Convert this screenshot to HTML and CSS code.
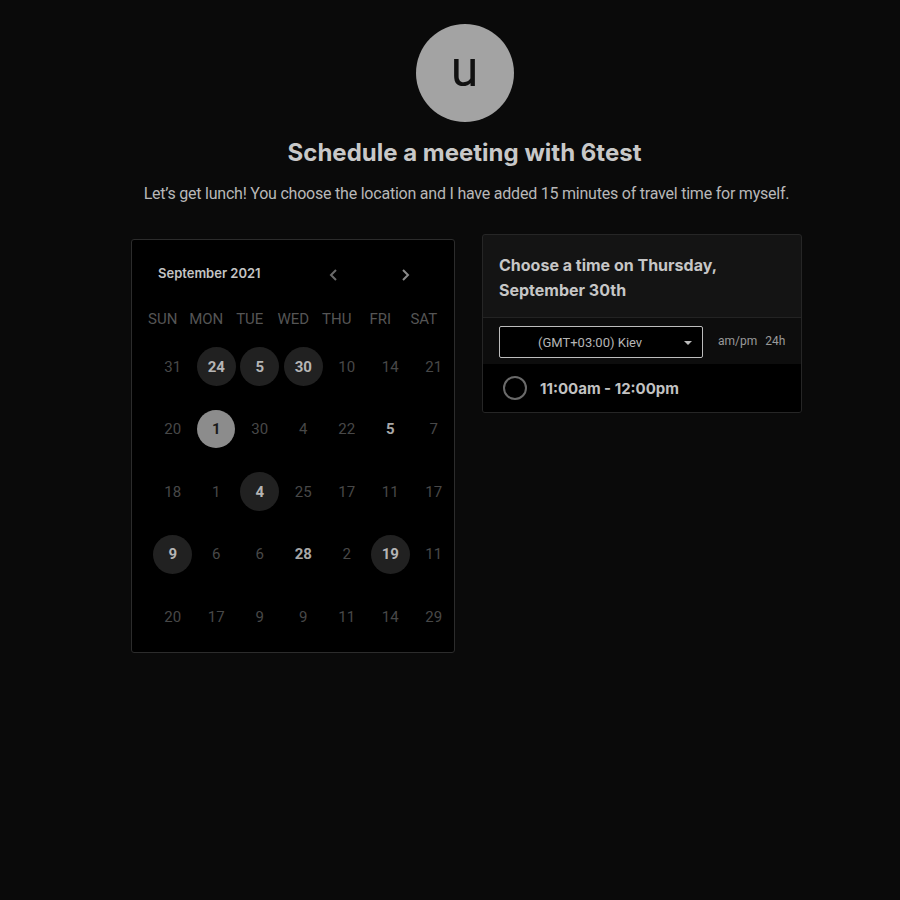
FILE: index.html
```html
<!DOCTYPE html>
<html>
<head>
<meta charset="utf-8">
<link rel="stylesheet" href="styles.css">
</head>
<body>
<main class="page">
  <div class="avatar">u</div>
  <h1 class="title">Schedule a meeting with 6test</h1>
  <p class="subtitle">Let’s get lunch! You choose the location and I have added 15 minutes of travel time for myself.</p>
  <div class="panels">
    <section class="calendar">
      <div class="cal-head">
        <span class="month">September 2021</span>
        <span class="nav">
          <svg width="12" height="14" viewBox="0 0 12 14"><path d="M8 2 L3 7 L8 12" fill="none" stroke="#6a6a6a" stroke-width="2"/></svg>
          <svg width="12" height="14" viewBox="0 0 12 14"><path d="M4 2 L9 7 L4 12" fill="none" stroke="#8a8a8a" stroke-width="2"/></svg>
        </span>
      </div>
      <div class="grid">
        <span class="wd">SUN</span><span class="wd">MON</span><span class="wd">TUE</span><span class="wd">WED</span><span class="wd">THU</span><span class="wd">FRI</span><span class="wd">SAT</span>
        <span class="d">31</span><span class="d av">24</span><span class="d av">5</span><span class="d av">30</span><span class="d">10</span><span class="d">14</span><span class="d">21</span>
        <span class="d">20</span><span class="d sel">1</span><span class="d">30</span><span class="d">4</span><span class="d">22</span><span class="d b">5</span><span class="d">7</span>
        <span class="d">18</span><span class="d">1</span><span class="d av">4</span><span class="d">25</span><span class="d">17</span><span class="d">11</span><span class="d">17</span>
        <span class="d av">9</span><span class="d">6</span><span class="d">6</span><span class="d b">28</span><span class="d">2</span><span class="d av">19</span><span class="d">11</span>
        <span class="d">20</span><span class="d">17</span><span class="d">9</span><span class="d">9</span><span class="d">11</span><span class="d">14</span><span class="d">29</span>
      </div>
    </section>
    <section class="times">
      <div class="times-head">Choose a time on Thursday, September 30th</div>
      <div class="controls">
        <div class="select">(GMT+03:00) Kiev<span class="caret"></span></div>
        <div class="fmt"><span>am/pm</span><span>24h</span></div>
      </div>
      <div class="slot"><span class="radio"></span><span class="slot-text">11:00am - 12:00pm</span></div>
    </section>
  </div>
</main>
</body>
</html>
```
FILE: styles.css
```css
* { box-sizing: border-box; }
html, body { margin: 0; background: #0a0a0a; }
body { font-family: Roboto, "Liberation Sans", sans-serif; color: #bdbdbd; }
.page {
  width: 671px;
  margin-left: 129px;
  padding-top: 24px;
  display: flex;
  flex-direction: column;
  align-items: center;
}
.avatar {
  width: 98px; height: 98px; border-radius: 50%;
  background: #a3a3a3; color: #111;
  display: flex; align-items: center; justify-content: center;
  font-family: Roboto, sans-serif; font-size: 50px; line-height: 1;
  padding-bottom: 8px;
}
.title {
  margin: 16px 0 0;
  font-family: Inter, sans-serif; font-weight: 700; font-size: 24px;
  letter-spacing: 0;
  color: #c8c8c8; line-height: 30px;
}
.subtitle {
  margin: 15px 0 0 4px;
  font-size: 16px; line-height: 22px; color: #b8b8b8;
  white-space: nowrap;
  letter-spacing: -0.22px;
}
.panels {
  width: 100%;
  margin-left: 4px;
  display: flex; align-items: flex-start; gap: 27px;
  margin-top: 29px;
}
.calendar {
  width: 324px; height: 414px;
  margin-top: 5px;
  border: 1px solid #2c2c2c; border-radius: 3px;
  background: #000;
  padding: 22px 10px 0 9px;
}
.cal-head { display: flex; align-items: center; padding-left: 17px; height: 22px; }
.month { font-family: Inter, sans-serif; font-weight: 600; font-size: 13px; color: #c4c4c4; width: 170px; }
.nav { display: flex; gap: 59px; margin-top: 4px; }
.grid {
  display: grid;
  grid-template-columns: repeat(7, 43.5px);
  grid-auto-rows: 62.6px;
  grid-template-rows: 38px;
  margin-top: 25px;
}
.wd {
  font-size: 15px; color: #555; text-align: center; line-height: 20px;
}
.d {
  align-self: start; justify-self: center;
  margin-left: 20px;
  width: 39px; height: 39px; border-radius: 50%;
  display: flex; align-items: center; justify-content: center;
  font-size: 15px; color: #484848;
}
.d.av { background: #212121; color: #b5b5b5; font-weight: 700; }
.d.b { color: #a8a8a8; font-weight: 700; }
.d.sel { background: #8c8c8c; color: #1a1a1a; font-weight: 700; width: 38px; height: 38px; }
.times {
  width: 321px;
  border: 1px solid #262626; border-radius: 3px;
  background: #141414;
  overflow: hidden;
}
.times-head {
  padding: 18px 50px 14px 16px;
  font-family: Inter, sans-serif; font-weight: 700; font-size: 16px; line-height: 25px;
  color: #c6c6c6;
  border-bottom: 1px solid #232323;
}
.controls {
  display: flex; align-items: center; gap: 15px;
  padding: 8px 15px 6px 16px;
  background: #0d0d0d;
}
.select {
  position: relative;
  width: 204px; height: 32px;
  border: 1px solid #bdbdbd; border-radius: 2px;
  background: #000;
  font-size: 13px; color: #b5b5b5;
  display: flex; align-items: center; padding-left: 38px;
}
.caret {
  position: absolute; right: 10px; top: 14px;
  border-left: 4px solid transparent; border-right: 4px solid transparent;
  border-top: 4px solid #bbb;
}
.fmt { display: flex; gap: 8px; font-size: 12px; color: #9a9a9a; margin-top: -2px; }
.slot {
  background: #000;
  height: 48px;
  display: flex; align-items: center; padding-left: 20px;
}
.radio {
  width: 24px; height: 24px; border-radius: 50%;
  border: 2px solid #6a6a6a; margin-right: 13px;
}
.slot-text { font-family: Inter, sans-serif; font-weight: 700; font-size: 15px; color: #c2c2c2; }
```
